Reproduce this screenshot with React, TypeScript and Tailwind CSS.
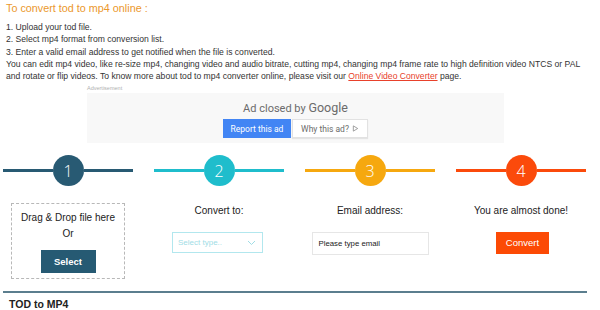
import React from "react";

const Step = ({ n, color, children }: { n: number; color: string; children: React.ReactNode }) => (
  <div className="w-[151px] shrink-0 pl-[3px] pr-[18px] flex flex-col items-center">
    <div className="w-full flex items-center h-[31px]">
      <div className="flex-1 h-[3px]" style={{ backgroundColor: color }} />
      <div
        className="w-[31px] h-[31px] rounded-full flex items-center justify-center text-white text-[16px] font-light font-['Open_Sans',sans-serif]"
        style={{ backgroundColor: color }}
      >
        {n}
      </div>
      <div className="flex-1 h-[3px]" style={{ backgroundColor: color }} />
    </div>
    {children}
  </div>
);

export default function App() {
  return (
    <div className="w-[600px] h-[310px] bg-white overflow-hidden font-['Liberation_Sans',Arial,sans-serif] text-[#333]">
      <div className="pl-[6px] pt-[1px]">
        <h2 className="text-[10.8px] leading-[14px] text-[#eb982c]">To convert tod to mp4 online :</h2>
        <div className="mt-[6px] text-[8.6px] leading-[12.3px] text-[#333]">
          <p>1. Upload your tod file.</p>
          <p>2. Select mp4 format from conversion list.</p>
          <p>3. Enter a valid email address to get notified when the file is converted.</p>
          <p className="whitespace-nowrap">
            You can edit mp4 video, like re-size mp4, changing video and audio bitrate, cutting mp4, changing mp4 frame rate to high definition video NTCS or PAL
            <br />
            and rotate or flip videos. To know more about tod to mp4 converter online, please visit our{" "}
            <span className="text-[#e8412b] underline">Online Video Converter</span> page.
          </p>
        </div>
      </div>

      <div className="ml-[87px] w-[417px] mt-[2px]">
        <div className="text-[5.5px] leading-[8px] text-[#b0b0b0]">Advertisement</div>
        <div className="mt-[1px] h-[50px] bg-[#f8f8f8] flex flex-col items-center pt-[6px]">
          <div className="text-[#6b6b6b] leading-[15px] font-['Roboto',Arial,sans-serif]">
            <span className="text-[11px]">Ad closed by </span>
            <span className="text-[12.5px]">Google</span>
          </div>
          <div className="mt-[3px] flex gap-[1px]">
            <div className="w-[68px] h-[19px] bg-[#4285f4] text-white text-[8.5px] flex items-center justify-center font-['Roboto',Arial,sans-serif]">
              Report this ad
            </div>
            <div className="w-[76px] h-[19px] bg-white border border-[#e2e2e2] shadow-[0_1px_1px_rgba(0,0,0,0.08)] text-[#6b6b6b] text-[8.5px] flex items-center justify-center gap-[3px] font-['Roboto',Arial,sans-serif]">
              <span>Why this ad?</span>
              <svg width="7" height="7" viewBox="0 0 8 8">
                <path d="M1.5 1 L6.5 4 L1.5 7 Z" fill="none" stroke="#888" strokeWidth="0.9" />
              </svg>
            </div>
          </div>
        </div>
      </div>

      <div className="mt-[12px] flex">
        <Step n={1} color="#285a73">
          <div className="mt-[17px] w-[114px] h-[76px] border border-dashed border-[#b8b8b8] flex flex-col items-center pt-[6px]">
            <div className="text-[10px] leading-[16px] text-[#222]">Drag &amp; Drop file here</div>
            <div className="text-[10px] leading-[16px] text-[#222]">Or</div>
            <div className="mt-[8px] w-[55px] h-[23px] bg-[#265a73] text-white text-[9.5px] font-bold flex items-center justify-center">
              Select
            </div>
          </div>
        </Step>
        <Step n={2} color="#1fbdcc">
          <div className="mt-[19px] text-[10px] leading-[12px] text-[#222]">Convert to:</div>
          <div className="mt-[15px] w-[91px] h-[21px] border border-[#b2e7ee] flex items-center justify-between pl-[5px] pr-[6px] mr-[3px]">
            <span className="text-[8px] text-[#9fdde6]">Select type..</span>
            <svg width="9" height="6" viewBox="0 0 9 6">
              <path d="M1 1 L4.5 4.5 L8 1" fill="none" stroke="#9fdde6" strokeWidth="1" />
            </svg>
          </div>
        </Step>
        <Step n={3} color="#f6a80f">
          <div className="mt-[19px] text-[10px] leading-[12px] text-[#222]">Email address:</div>
          <div className="mt-[15px] w-[117px] h-[23px] border border-[#e6e6e6] flex items-center pl-[6px]">
            <span className="text-[7.8px] text-[#222]">Please type email</span>
          </div>
        </Step>
        <Step n={4} color="#fb4a0b">
          <div className="mt-[19px] text-[10px] leading-[12px] text-[#222]">You are almost done!</div>
          <div className="mt-[15px] ml-[3px] w-[53px] h-[22px] bg-[#fc4a05] text-white text-[9.5px] flex items-center justify-center">
            Convert
          </div>
        </Step>
      </div>

      <div className="mt-[12px] ml-[3px] w-[584px] h-[2px] bg-[#5b7e8e]" />
      <div className="pl-[9px] pt-[5px] text-[10.5px] leading-[12px] font-bold text-[#222]">TOD to MP4</div>
    </div>
  );
}
